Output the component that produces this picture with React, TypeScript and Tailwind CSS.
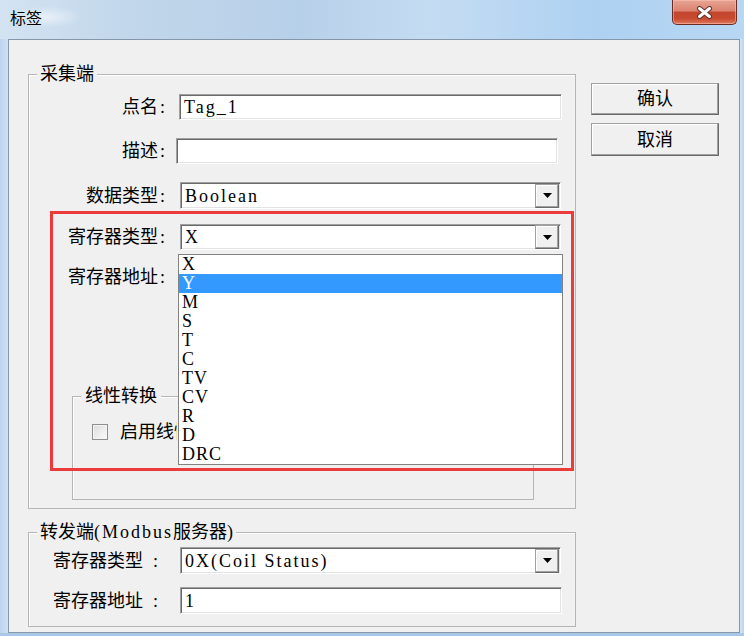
import React from 'react';

const labelFont =
  "font-['Liberation_Serif','Noto_Sans_CJK_SC',serif] text-[18px] leading-[20px] text-black";
const fieldFont =
  "font-['Liberation_Serif',serif] text-[18px] leading-[20px] tracking-[2px] text-black";

const sunken =
  'border border-t-[#a0a0a0] border-l-[#a0a0a0] border-r-white border-b-white bg-white shadow-[inset_1px_1px_0_#696969,inset_-1px_-1px_0_#e3e3e3]';
const raised =
  'border border-[#a0a0a0] border-r-[#696969] border-b-[#696969] bg-[#f0f0f0] shadow-[inset_-1px_-1px_0_#a0a0a0,inset_1px_1px_0_#fff]';

const registerTypes = ['X', 'Y', 'M', 'S', 'T', 'C', 'TV', 'CV', 'R', 'D', 'DRC'];

type FieldProps = { value?: string; className?: string };

const TextField = ({ value = '', className = '' }: FieldProps) => (
  <div className={`${sunken} flex items-center pl-[4px] ${fieldFont} ${className}`}>{value}</div>
);

const ComboBox = ({ value = '', className = '' }: FieldProps) => (
  <div className={`${sunken} flex items-center ${className}`}>
    <div className={`flex-1 pl-[4px] ${fieldFont}`}>{value}</div>
    <div className={`${raised} mr-[1px] flex h-[24px] w-[24px] items-center justify-center`}>
      <svg width="9" height="5" viewBox="0 0 9 5">
        <polygon points="0,0 9,0 4.5,5" fill="#000" />
      </svg>
    </div>
  </div>
);

const GroupBox = ({
  title,
  className = '',
  legendClass = 'px-[3px]',
  children,
}: {
  title: React.ReactNode;
  className?: string;
  legendClass?: string;
  children: React.ReactNode;
}) => (
  <fieldset
    className={`m-0 min-w-0 border border-[#b5b5b5] p-0 shadow-[inset_1px_1px_0_#fff] ${className}`}
  >
    <legend className={`ml-[8px] bg-[#f0f0f0] ${legendClass} ${labelFont} leading-[18px]`}>
      {title}
    </legend>
    {children}
  </fieldset>
);

const Row = ({
  label,
  className = '',
  children,
}: {
  label: string;
  className?: string;
  children: React.ReactNode;
}) => (
  <div className={`flex items-center ${className}`}>
    <div className={`w-[136px] shrink-0 text-right ${labelFont}`}>
      {label}
      <span className="ml-[2px]">:</span>
    </div>
    {children}
  </div>
);

const ListBox = () => (
  <div className="absolute left-[-2px] top-[30px] z-10 w-[385px] border border-[#828282] bg-white">
    {registerTypes.map(item =>
      item === 'Y' ? (
        <div
          key={item}
          className="h-[19px] overflow-hidden border border-dotted border-[#9c8a70] bg-[#3399ff] pl-[2px] font-['Liberation_Serif',serif] text-[18px] leading-[17px] tracking-[1px] text-white"
        >
          {item}
        </div>
      ) : (
        <div
          key={item}
          className="h-[19px] overflow-hidden pl-[3px] font-['Liberation_Serif',serif] text-[18px] leading-[19px] tracking-[1px] text-black"
        >
          {item}
        </div>
      ),
    )}
  </div>
);

const LowerLabel = ({ text }: { text: string }) => (
  <div className={`ml-[24px] w-[127px] shrink-0 ${labelFont}`}>
    {text}
    <span className="ml-[10px]">:</span>
  </div>
);

const TitleBar = () => (
  <div className="flex h-[39px] shrink-0 items-start justify-between bg-[linear-gradient(90deg,#d3e3f2_0%,#c1d6ea_18%,#b7d0e9_40%,#c4dcf2_58%,#aed1f2_80%,#b8d7f3_100%)]">
    <div className="ml-[10px] mt-[6px] bg-[radial-gradient(ellipse_at_center,rgba(235,242,250,0.9),rgba(235,242,250,0)_70%)] pr-[40px] font-['Noto_Sans_CJK_SC',sans-serif] text-[16px] leading-[22px] text-black">
      标签
    </div>
    <div className="mr-[7px] flex h-[25px] w-[65px] items-center justify-center rounded-b-[5px] border border-t-0 border-[#6b2b22] bg-[linear-gradient(180deg,#e8a594_0%,#db826f_45%,#c4452d_52%,#c74a31_78%,#e07b5d_100%)] shadow-[inset_0_0_0_1px_rgba(255,200,190,0.5)]">
      <svg width="17" height="13" viewBox="0 0 17 13">
        <path d="M3.5 2.5 L13.5 10.5 M13.5 2.5 L3.5 10.5" stroke="#5b3530" strokeWidth="5" strokeLinecap="round" />
        <path d="M3.5 2.5 L13.5 10.5 M13.5 2.5 L3.5 10.5" stroke="#fff" strokeWidth="3" strokeLinecap="round" />
      </svg>
    </div>
  </div>
);

const App = () => {
  return (
    <div className="flex h-[636px] w-[744px] flex-col overflow-hidden bg-[#a9c8e8]">
      <TitleBar />
      <div className="flex h-[594px] shrink-0">
        <div className="w-[8px] bg-[linear-gradient(90deg,#bcd5ee,#cfe1f2)]" />
        <div className="flex h-[594px] w-[732px] gap-[15px] border border-[#8596a8] bg-[#f0f0f0] pl-[19px] pt-[24px]">
          <div className="relative w-[548px]">
            <GroupBox title="采集端">
              <div className="pb-[8px]">
                <Row label="点名" className="mt-[10px]">
                  <TextField value="Tag_1" className="ml-[14px] h-[26px] w-[383px]" />
                </Row>
                <Row label="描述" className="mt-[18px]">
                  <TextField className="ml-[11px] h-[26px] w-[382px]" />
                </Row>
                <Row label="数据类型" className="mt-[18px]">
                  <ComboBox value="Boolean" className="ml-[15px] h-[27px] w-[381px]" />
                </Row>
                <Row label="寄存器类型" className="mt-[15px]">
                  <div className="relative ml-[15px] h-[26px] w-[381px]">
                    <ComboBox value="X" className="h-[26px] w-[381px]" />
                    <ListBox />
                  </div>
                </Row>
                <Row label="寄存器地址" className="mt-[14px]">
                  <TextField className="ml-[15px] h-[26px] w-[381px]" />
                </Row>
                <GroupBox title="线性转换" legendClass="px-[4px]" className="ml-[43px] mt-[96px] w-[462px]">
                  <div className="flex items-center pb-[57px] pt-[16px]">
                    <div className="ml-[19px] h-[16px] w-[16px] shrink-0 border border-[#8e8f8f] bg-[linear-gradient(135deg,#dcdcdc,#fbfbfb)] shadow-[inset_0_0_0_1px_#f4f4f4]" />
                    <div className={`ml-[12px] w-[57px] overflow-hidden whitespace-nowrap ${labelFont}`}>
                      启用线性转换
                    </div>
                  </div>
                </GroupBox>
              </div>
            </GroupBox>

            <GroupBox
              title={
                <>
                  转发端<span className="tracking-[2px]">(Modbus</span>服务器)
                </>
              }
              className="mt-[13px]"
            >
              <div className="pb-[12px]">
                <div className="mt-[5px] flex items-center">
                  <LowerLabel text="寄存器类型" />
                  <ComboBox value="0X(Coil Status)" className="h-[27px] w-[381px]" />
                </div>
                <div className="mt-[13px] flex items-center">
                  <LowerLabel text="寄存器地址" />
                  <TextField value="1" className="h-[27px] w-[382px]" />
                </div>
              </div>
            </GroupBox>

            <div className="pointer-events-none absolute left-[22px] top-[147px] z-20 h-[260px] w-[524px] border-[3px] border-[#ec3b3b]" />
          </div>

          <div className="flex w-[128px] flex-col gap-[8px] pt-[19px]">
            <div className={`${raised} flex h-[32px] items-center justify-center ${labelFont}`}>确认</div>
            <div className={`${raised} flex h-[33px] items-center justify-center ${labelFont}`}>取消</div>
          </div>
        </div>
        <div className="flex-1 bg-[linear-gradient(90deg,#d4e5f5,#b9d4ee)]" />
      </div>
      <div className="flex-1 bg-[#a9c8e8]" />
    </div>
  );
};

export default App;
